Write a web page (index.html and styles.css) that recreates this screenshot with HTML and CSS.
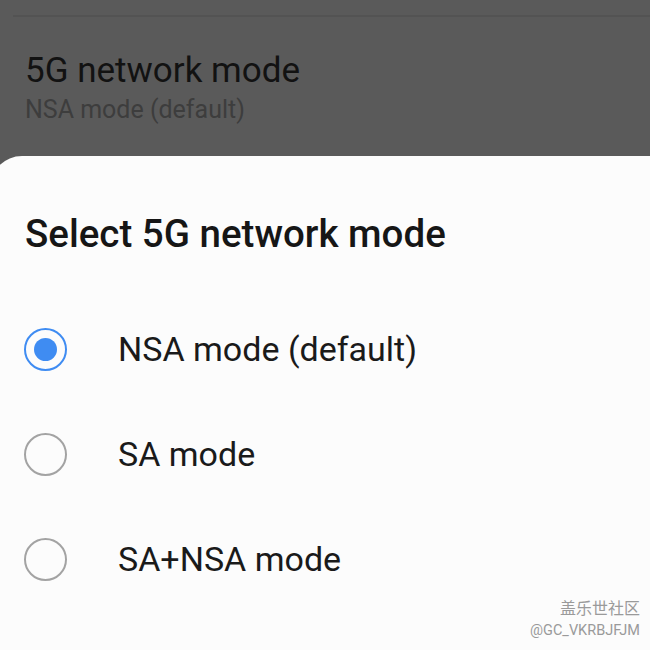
FILE: index.html
```html
<!DOCTYPE html>
<html lang="en">

<head>
    <meta charset="UTF-8">
    <meta name="viewport" content="width=device-width, initial-scale=1.0">
    <title>5G network mode</title>
    <link rel="stylesheet" href="styles.css">
</head>

<body>
    <div class="screen">
        <div class="backdrop">
            <div class="divider"></div>
            <div class="setting">
                <div class="setting-title">5G network mode</div>
                <div class="setting-value">NSA mode (default)</div>
            </div>
        </div>
        <div class="sheet">
            <h1 class="sheet-title">Select 5G network mode</h1>
            <div class="options">
                <label class="option">
                    <span class="radio checked"></span>
                    <span class="option-label">NSA mode (default)</span>
                </label>
                <label class="option">
                    <span class="radio"></span>
                    <span class="option-label">SA mode</span>
                </label>
                <label class="option">
                    <span class="radio"></span>
                    <span class="option-label">SA+NSA mode</span>
                </label>
            </div>
            <div class="watermark">
                <div>盖乐世社区</div>
                <div class="handle">@GC_VKRBJFJM</div>
            </div>
        </div>
    </div>
</body>

</html>
```

FILE: styles.css
```css
html,
body {
    margin: 0;
    height: 100%;
}

body {
    font-family: Roboto, "Noto Sans", "Noto Sans CJK SC", sans-serif;
    background: #5a5a5a;
    overflow: hidden;
}

.screen {
    width: 650px;
    height: 650px;
    display: flex;
    flex-direction: column;
}

.backdrop {
    height: 156px;
    background: #5a5a5a;
    padding-left: 13px;
    flex-shrink: 0;
}

.divider {
    height: 15px;
    border-bottom: 2px solid #535353;
}

.setting {
    padding: 34px 0 0 12px;
}

.setting-title {
    font-size: 35px;
    color: #121212;
    line-height: 40px;
}

.setting-value {
    font-size: 25px;
    color: #3d3d3d;
    line-height: 38px;
}

.sheet {
    flex: 1;
    background: #fcfcfc;
    margin-left: -10px;
    border-top-left-radius: 32px;
    padding-left: 35px;
    position: relative;
}

.sheet-title {
    margin: 0;
    padding-top: 57px;
    font-size: 38.5px;
    font-weight: 500;
    color: #161616;
    line-height: 42px;
}

.options {
    padding-top: 72px;
    display: flex;
    flex-direction: column;
    gap: 61px;
}

.option {
    display: flex;
    align-items: center;
    height: 44px;
}

.radio {
    width: 43px;
    height: 43px;
    border: 2px solid #a3a3a3;
    border-radius: 50%;
    box-sizing: border-box;
    margin-left: -1px;
    margin-right: 51px;
    display: flex;
    align-items: center;
    justify-content: center;
}

.radio.checked {
    border: 2.5px solid #3f8cf2;
}

.radio.checked::after {
    content: "";
    width: 23px;
    height: 23px;
    border-radius: 50%;
    background: #3f8cf2;
}

.option-label {
    font-size: 34px;
    color: #1a1a1a;
}

.watermark {
    position: absolute;
    right: 10px;
    bottom: 8px;
    text-align: right;
    color: #9a9a9a;
    font-size: 16px;
    line-height: 22px;
}

.handle {
    font-size: 14.5px;
}
```
